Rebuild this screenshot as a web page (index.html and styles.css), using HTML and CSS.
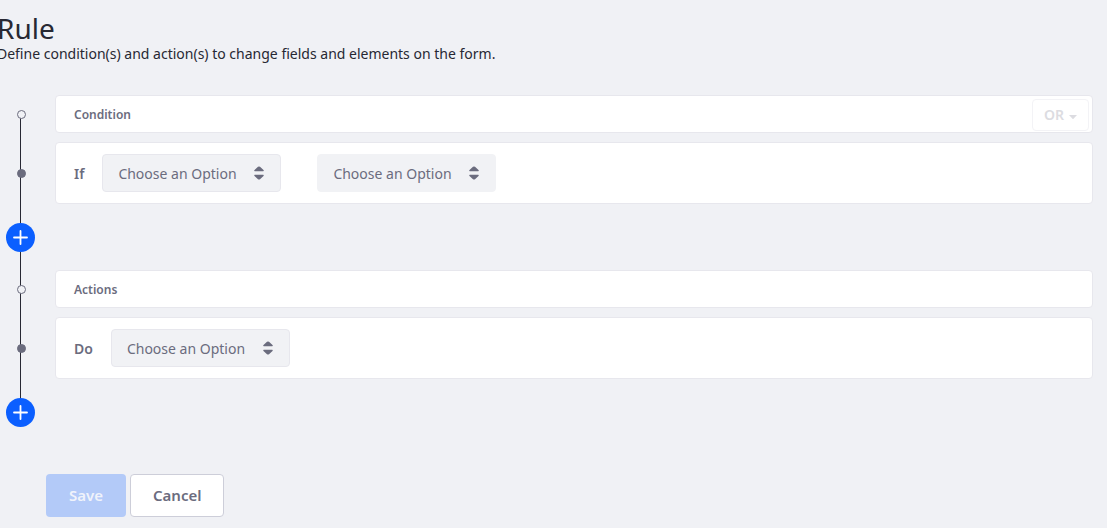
FILE: index.html
```html
<!DOCTYPE html>
<html lang="en">
<head>
<meta charset="utf-8">
<title>Rule</title>
<link rel="stylesheet" href="styles.css">
</head>
<body>
<main class="rule">
  <header class="rule-header">
    <h1 class="rule-title">Rule</h1>
    <p class="rule-description">Define condition(s) and action(s) to change fields and elements on the form.</p>
  </header>

  <form class="rule-form">
    <div class="timeline">
      <section class="timeline-group">
        <div class="timeline-item">
          <div class="rail"><span class="dot"></span></div>
          <div class="card card-header">
            <h2 class="card-title">Condition</h2>
            <button class="operator" type="button" disabled>OR
              <svg class="caret" viewBox="0 0 8 4" aria-hidden="true"><path d="M0 0h8L4.500 3.700q-.5.4-1 0z"/></svg>
            </button>
          </div>
        </div>
        <div class="timeline-item">
          <div class="rail"><span class="dot dot-filled"></span></div>
          <div class="card card-body">
            <label class="card-label" for="if-field">If</label>
            <div class="select">
              <select class="select-control" id="if-field"><option>Choose an Option</option></select>
              <svg class="select-icon" viewBox="0 0 10 14" aria-hidden="true"><path d="M.8 5.300h8.400q1-.3.300-1.200L6 .800q-1-.8-2 0L.5 4.100q-.7.900.3 1.200zM.8 8.700h8.400q1 .3.300 1.200L6 13.200q-1 .8-2 0L.5 9.900q-.7-.9.300-1.200z"/></svg>
            </div>
            <div class="select select-operator">
              <select class="select-control select-disabled" aria-label="Operator" disabled><option>Choose an Option</option></select>
              <svg class="select-icon" viewBox="0 0 10 14" aria-hidden="true"><path d="M.8 5.300h8.400q1-.3.300-1.200L6 .800q-1-.8-2 0L.5 4.100q-.7.900.3 1.200zM.8 8.700h8.400q1 .3.300 1.200L6 13.200q-1 .8-2 0L.5 9.900q-.7-.9.300-1.200z"/></svg>
            </div>
          </div>
        </div>
        <button class="add" type="button" aria-label="Add condition">
          <svg class="add-icon" viewBox="0 0 15 15" aria-hidden="true"><path d="M7.500 1v13M1 7.500h13"/></svg>
        </button>
      </section>

      <section class="timeline-group">
        <div class="timeline-item">
          <div class="rail"><span class="dot"></span></div>
          <div class="card card-header">
            <h2 class="card-title">Actions</h2>
          </div>
        </div>
        <div class="timeline-item">
          <div class="rail"><span class="dot dot-filled"></span></div>
          <div class="card card-body">
            <label class="card-label" for="do-action">Do</label>
            <div class="select">
              <select class="select-control" id="do-action"><option>Choose an Option</option></select>
              <svg class="select-icon" viewBox="0 0 10 14" aria-hidden="true"><path d="M.8 5.300h8.400q1-.3.300-1.200L6 .800q-1-.8-2 0L.5 4.100q-.7.900.3 1.200zM.8 8.700h8.400q1 .3.300 1.200L6 13.200q-1 .8-2 0L.5 9.900q-.7-.9.300-1.200z"/></svg>
            </div>
          </div>
        </div>
        <button class="add" type="button" aria-label="Add action">
          <svg class="add-icon" viewBox="0 0 15 15" aria-hidden="true"><path d="M7.500 1v13M1 7.500h13"/></svg>
        </button>
      </section>
    </div>

    <div class="actions">
      <button class="button button-primary" type="submit" disabled>Save</button>
      <button class="button button-secondary" type="button">Cancel</button>
    </div>
  </form>
</main>
</body>
</html>
```
FILE: styles.css
```css
* {
  box-sizing: border-box;
}

body {
  margin: 0;
  background: #f0f1f5;
  color: #272833;
  font-family: "Noto Sans", "Open Sans", sans-serif;
  font-size: 14px;
  line-height: 20px;
}

button,
select {
  font: inherit;
}

.rule {
  padding: 12px 14px 11px 0;
}

.rule-header {
  margin-left: -3px;
}

.rule-title {
  margin: 0;
  font-size: 28px;
  font-weight: 400;
  line-height: 32px;
}

.rule-description {
  margin: 0;
}

.rule-form {
  margin-top: 31px;
}

.timeline {
  position: relative;
  display: flex;
  flex-direction: column;
  gap: 18px;
}

.timeline::before {
  content: "";
  position: absolute;
  top: 19px;
  bottom: 14px;
  left: 20px;
  width: 1px;
  background: #272833;
}

.timeline-group {
  display: flex;
  flex-direction: column;
  gap: 9px;
}

.timeline-item {
  display: grid;
  grid-template-columns: 42px 1fr;
  column-gap: 13px;
  align-items: center;
}

.rail {
  position: relative;
  display: flex;
  justify-content: center;
}

.dot {
  width: 9px;
  height: 9px;
  border: 1px solid #6b6c7e;
  border-radius: 50%;
  background: #f0f1f5;
}

.dot-filled {
  background: #6b6c7e;
}

.card {
  display: flex;
  align-items: center;
  border: 1px solid #e7e7ed;
  border-radius: 4px;
  background: #fff;
  color: #6b6c7e;
}

.card-header {
  justify-content: space-between;
  min-height: 38px;
  padding: 3px 3px 1px 18px;
}

.card-title {
  margin: 0;
  font-size: 12px;
  font-weight: 600;
}

.card-body {
  padding: 11px 18px;
}

.card-label {
  margin-right: 18px;
  padding-top: 2px;
  font-weight: 600;
}

.operator {
  display: flex;
  align-items: center;
  gap: 5px;
  height: 32px;
  padding: 0 11px;
  border: 1px solid #f3f3f6;
  border-radius: 4px;
  background: #fff;
  color: #dcdce1;
  font-weight: 600;
}

.caret {
  width: 8px;
  height: 4px;
  margin-top: 3px;
  fill: currentColor;
}

.select {
  position: relative;
  width: 179px;
}

.select-operator {
  margin-left: 36px;
}

.select-control {
  display: block;
  width: 100%;
  height: 38px;
  padding: 2px 32px 0 15px;
  border: 1px solid #e7e7ed;
  border-radius: 4px;
  appearance: none;
  background: #f1f2f5;
  color: #6b6c7e;
}

.select-disabled {
  border-color: #f1f2f5;
  opacity: 1;
}

.select-icon {
  position: absolute;
  top: 12px;
  right: 17px;
  width: 10px;
  height: 14px;
  fill: #6b6c7e;
  pointer-events: none;
}

.add {
  position: relative;
  display: grid;
  place-items: center;
  width: 29px;
  height: 29px;
  margin: 10px 0 0 6px;
  padding: 0;
  border: 0;
  border-radius: 50%;
  background: #0b5fff;
}

.add-icon {
  width: 15px;
  height: 15px;
  fill: none;
  stroke: #fff;
  stroke-width: 1.8;
  stroke-linecap: round;
}

.actions {
  display: flex;
  gap: 4px;
  margin: 47px 0 0 46px;
}

.button {
  height: 43px;
  padding: 0 22px 2px;
  border: 1px solid transparent;
  border-radius: 4px;
  font-size: 15px;
  font-weight: 600;
}

.button-primary {
  background: #b3caf8;
  color: #f0f3fb;
}

.button-secondary {
  border-color: #cdced9;
  background: #fff;
  color: #6b6c7e;
}
```
